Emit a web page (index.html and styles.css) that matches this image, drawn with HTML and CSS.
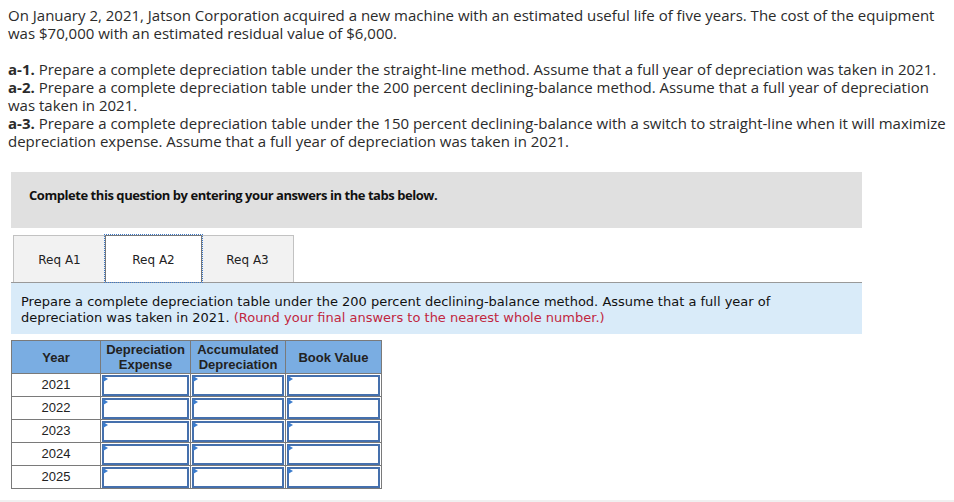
FILE: index.html
```html
<!DOCTYPE html>
<html>
<head>
<meta charset="utf-8">
<link rel="stylesheet" href="styles.css">
</head>
<body>
<div class="intro">
  <p>On January 2, 2021, Jatson Corporation acquired a new machine with an estimated useful life of five years. The cost of the equipment was $70,000 with an estimated residual value of $6,000.</p>
  <p class="reqs"><b>a-1.</b> Prepare a complete depreciation table under the straight-line method. Assume that a full year of depreciation was taken in 2021.<br><b>a-2.</b> Prepare a complete depreciation table under the 200 percent declining-balance method. Assume that a full year of depreciation was taken in 2021.<br><b>a-3.</b> Prepare a complete depreciation table under the 150 percent declining-balance with a switch to straight-line when it will maximize depreciation expense. Assume that a full year of depreciation was taken in 2021.</p>
</div>
<div class="question">
  <div class="banner">Complete this question by entering your answers in the tabs below.</div>
  <div class="tabs">
    <div class="tab">Req A1</div>
    <div class="tab active">Req A2</div>
    <div class="tab">Req A3</div>
  </div>
  <div class="panel">Prepare a complete depreciation table under the 200 percent declining-balance method. Assume that a full year of depreciation was taken in 2021. <span class="note">(Round your final answers to the nearest whole number.)</span></div>
  <table class="grid">
    <colgroup><col class="c1"><col class="c2"><col class="c3"><col class="c4"></colgroup>
    <thead>
      <tr><th>Year</th><th>Depreciation<br>Expense</th><th>Accumulated<br>Depreciation</th><th>Book Value</th></tr>
    </thead>
    <tbody>
      <tr><td class="yr">2021</td><td class="in"><div class="box"></div></td><td class="in"><div class="box"></div></td><td class="in"><div class="box"></div></td></tr>
      <tr><td class="yr">2022</td><td class="in"><div class="box"></div></td><td class="in"><div class="box"></div></td><td class="in"><div class="box"></div></td></tr>
      <tr><td class="yr">2023</td><td class="in"><div class="box"></div></td><td class="in"><div class="box"></div></td><td class="in"><div class="box"></div></td></tr>
      <tr><td class="yr">2024</td><td class="in"><div class="box"></div></td><td class="in"><div class="box"></div></td><td class="in"><div class="box"></div></td></tr>
      <tr><td class="yr">2025</td><td class="in"><div class="box"></div></td><td class="in"><div class="box"></div></td><td class="in"><div class="box"></div></td></tr>
    </tbody>
  </table>
</div>
<div class="footer"></div>
</body>
</html>
```
FILE: styles.css
```css
html, body { margin: 0; padding: 0; background: #fff; }
body { width: 954px; height: 502px; position: relative; overflow: hidden; }
.intro {
  padding: 6px 0 0 8px;
  font-family: "Open Sans", "Liberation Sans", sans-serif;
  font-size: 15px;
  line-height: 18px;
  color: #2b2b2b;
}
.intro p { margin: 0 0 18px 0; }
.intro b { font-weight: 700; }
.question { margin: 22px 0 0 11px; width: 851px; }
.banner {
  background: #e0e0e0;
  height: 56px;
  box-sizing: border-box;
  padding: 15px 0 0 18px;
  font-family: "Open Sans", "Liberation Sans", sans-serif;
  font-weight: 700;
  font-size: 13px;
  line-height: 16px;
  color: #111;
  letter-spacing: -0.45px;
}
.tabs { display: flex; margin: 7px 0 0 2px; }
.tab {
  box-sizing: border-box;
  width: 93px;
  height: 47px;
  background: #f2f2f2;
  border: 1px solid #c2c2c2;
  border-bottom: none;
  display: flex;
  align-items: center;
  justify-content: center;
  padding-top: 2px;
  font-family: "DejaVu Sans", Verdana, sans-serif;
  font-size: 12px;
  color: #222;
}
.tab + .tab { margin-left: -1px; }
.tab.active {
  width: 97px;
  background: #fff;
  border: 1px solid #777;
  border-bottom: none;
  outline: 1px dotted #3a78c9;
  outline-offset: 0;
  position: relative;
  z-index: 1;
}
.panel {
  border-top: 1px solid #999;
  background: #d9ebf9;
  padding: 11px 30px 7px 10px;
  font-family: "DejaVu Sans", Verdana, sans-serif;
  font-size: 13px;
  line-height: 16px;
  color: #111;
  height: 52px;
  box-sizing: border-box;
}
.note { color: #c1273f; }
.grid {
  margin-top: 6px;
  border-collapse: collapse;
  table-layout: fixed;
  width: 370px;
  font-family: "Liberation Sans", Arial, sans-serif;
  font-size: 13px;
}
.c1 { width: 89px; }
.c2 { width: 90px; }
.c3 { width: 95px; }
.c4 { width: 96px; }
.grid th {
  background: #7aade2;
  border: 1px solid #7a7a7a;
  height: 32px;
  padding: 0;
  font-weight: 700;
  color: #222;
  line-height: 15px;
  text-align: center;
}
.grid td {
  border: 1px solid #7a7a7a;
  padding: 0;
}
.grid td.yr { text-align: center; color: #222; line-height: 22px; }
.grid td.in { padding: 1px 1px 0 1px; }
.box {
  height: 21px;
  box-sizing: border-box;
  border: 2px solid #4570ad;
  background: #fff;
  position: relative;
}
.box::before {
  content: "";
  position: absolute;
  left: -1px;
  top: -1px;
  border-top: 3px solid transparent;
  border-bottom: 3px solid transparent;
  border-left: 5px solid #3c7ccc;
}
.footer {
  position: absolute;
  left: 0;
  right: 0;
  bottom: 0;
  height: 2px;
  background: #f0f0f0;
}
```
